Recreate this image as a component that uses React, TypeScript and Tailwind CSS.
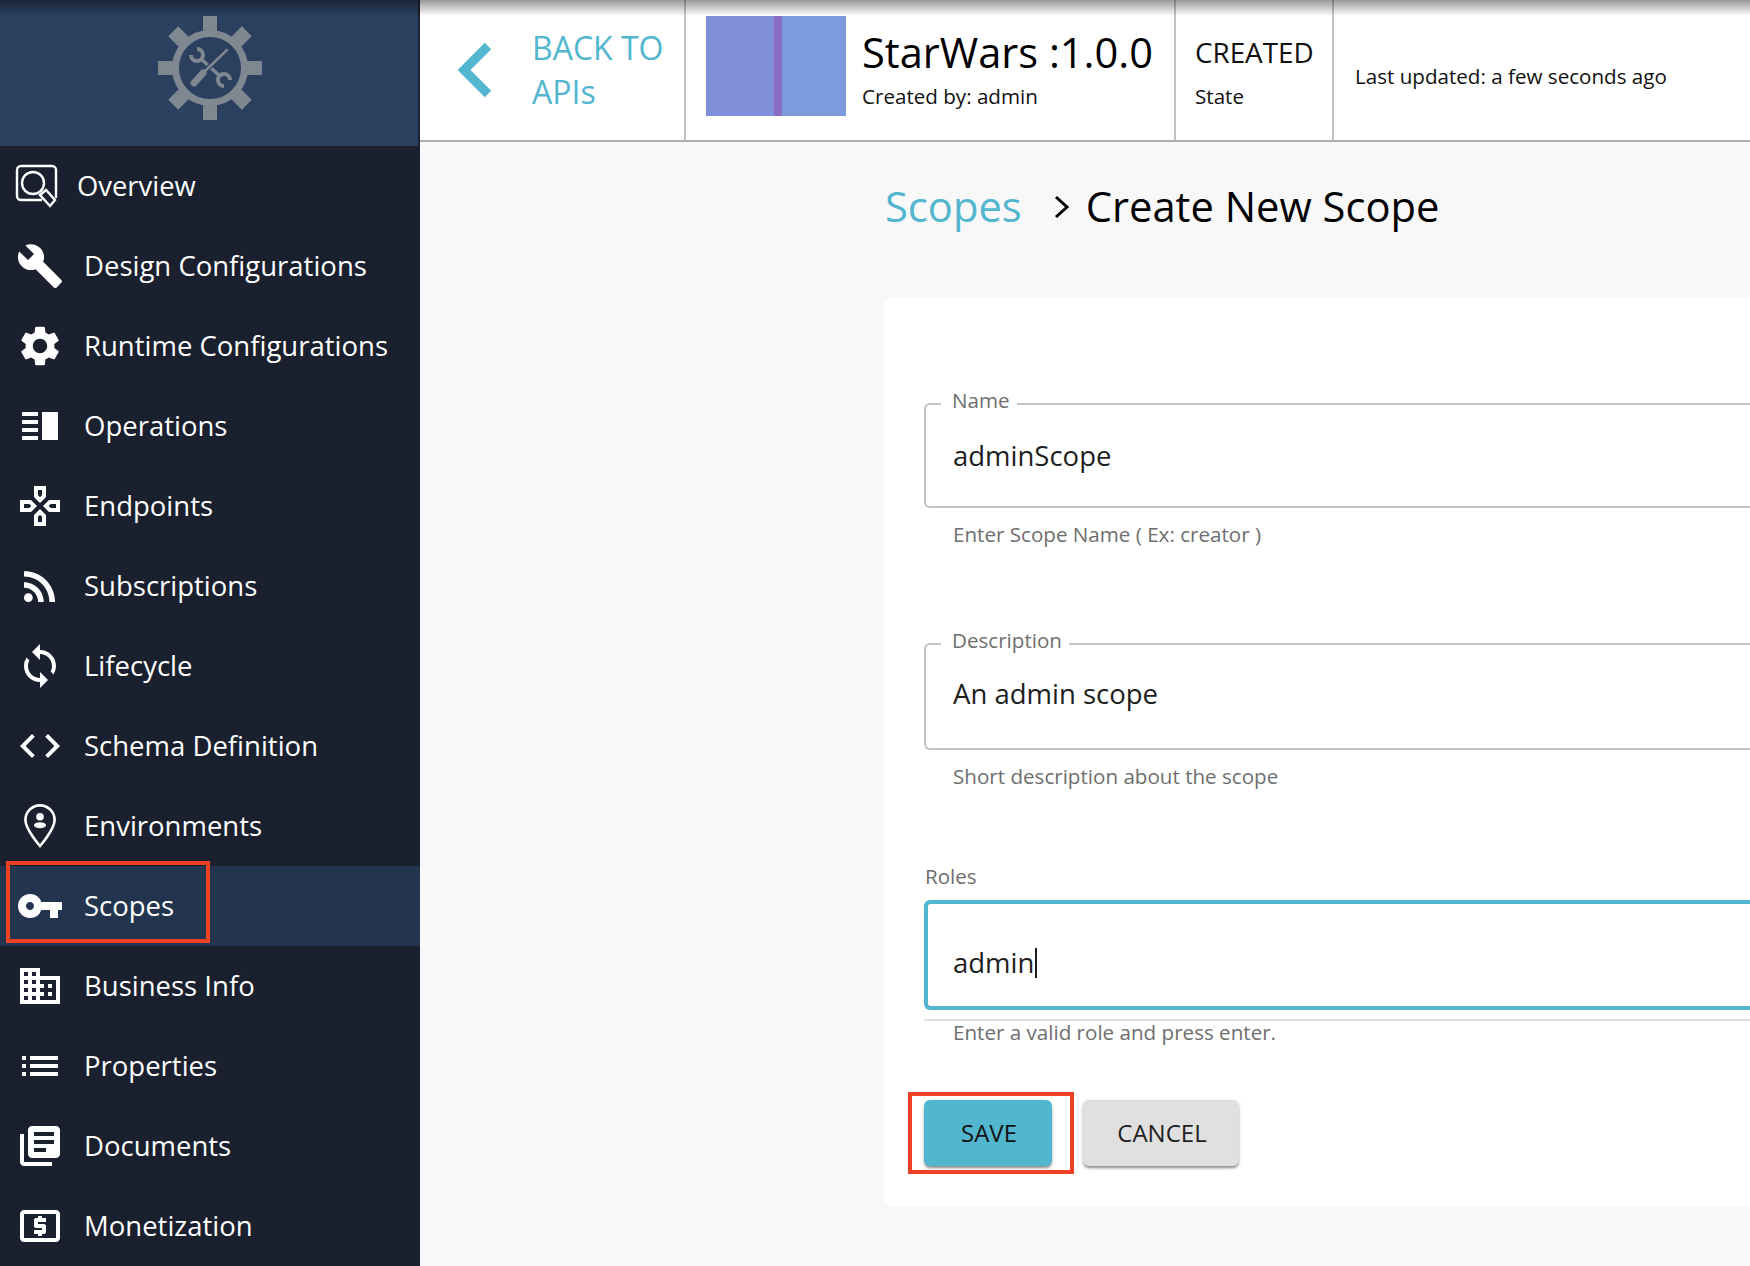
import { ReactNode } from "react";
import {
  MdBuild,
  MdBusiness,
  MdCode,
  MdLibraryBooks,
  MdList,
  MdOutlineGames,
  MdOutlineLocalAtm,
  MdRssFeed,
  MdSettings,
  MdSync,
  MdVpnKey,
} from "react-icons/md";

function OperationsIcon({ size }: { size: number }) {
  return (
    <svg width={size} height={size} viewBox="0 0 24 24" fill="currentColor">
      <rect x="3" y="5" width="8" height="2" />
      <rect x="3" y="9" width="8" height="2" />
      <rect x="3" y="13" width="8" height="2" />
      <rect x="3" y="17" width="8" height="2" />
      <rect x="13" y="5" width="8" height="14" />
    </svg>
  );
}

function EnvironmentIcon({ size }: { size: number }) {
  return (
    <svg width={size} height={size} viewBox="0 0 24 24" fill="none" stroke="currentColor" strokeWidth="1.3">
      <path d="M12 1.7c-4 0-7.3 3.2-7.3 7.3 0 4.6 7.3 13 7.3 13s7.3-8.4 7.3-13c0-4.1-3.3-7.3-7.3-7.3z" />
      <circle cx="12" cy="7.4" r="1.9" fill="currentColor" stroke="none" />
      <ellipse cx="12" cy="11.6" rx="3" ry="1.5" fill="currentColor" stroke="none" />
    </svg>
  );
}

function OverviewIcon() {
  return (
    <svg width="44" height="44" viewBox="0 0 44 44" fill="none" stroke="white" strokeWidth="2.4">
      <path d="M27 36H6a4 4 0 0 1-4-4V6a4 4 0 0 1 4-4h31a4 4 0 0 1 4 4v28" />
      <circle cx="18" cy="19" r="11" />
      <path d="M25 31l6-5 9 10-5 6z" fill="#1a202e" />
    </svg>
  );
}

function Logo() {
  const angles = [0, 45, 90, 135];
  return (
    <svg width="120" height="120" viewBox="0 0 120 120" fill="none" stroke="#7f8790">
      {angles.map((a) => (
        <rect key={a} x="53" y="8" width="14" height="104" fill="#7f8790" stroke="none" transform={`rotate(${a} 60 60)`} />
      ))}
      <circle cx="60" cy="60" r="34.5" strokeWidth="7" fill="#2b405f" />
      <path d="M50 50L71 69" strokeWidth="3.5" />
      <path d="M41 47A6 6 0 1 0 47 41" strokeWidth="4" />
      <path d="M80 72A6 6 0 1 0 74 78" strokeWidth="4" />
      <path d="M77 42L53 65" stroke="#2b405f" strokeWidth="5" />
      <path d="M77 42L53 65" strokeWidth="2.5" strokeLinecap="round" />
      <path d="M53 65L44 75" strokeWidth="7" strokeLinecap="round" />
    </svg>
  );
}

const navItems: { label: string; icon: ReactNode; active?: boolean }[] = [
  { label: "Design Configurations", icon: <MdBuild size={48} /> },
  { label: "Runtime Configurations", icon: <MdSettings size={48} /> },
  { label: "Operations", icon: <OperationsIcon size={48} /> },
  { label: "Endpoints", icon: <MdOutlineGames size={48} /> },
  { label: "Subscriptions", icon: <MdRssFeed size={48} /> },
  { label: "Lifecycle", icon: <MdSync size={48} /> },
  { label: "Schema Definition", icon: <MdCode size={48} /> },
  { label: "Environments", icon: <EnvironmentIcon size={48} /> },
  { label: "Scopes", icon: <MdVpnKey size={48} />, active: true },
  { label: "Business Info", icon: <MdBusiness size={48} /> },
  { label: "Properties", icon: <MdList size={48} /> },
  { label: "Documents", icon: <MdLibraryBooks size={48} /> },
  { label: "Monetization", icon: <MdOutlineLocalAtm size={48} /> },
];

function Sidebar() {
  return (
    <aside className="w-[420px] shrink-0 bg-[#1a202e] text-white">
      <div className="flex h-[146px] items-center justify-center border-r-2 border-[#1a202e] bg-[#2b405f] pb-[10px] pl-[2px]">
        <Logo />
      </div>
      <div className="flex h-20 items-center pl-[15px] text-[27.4px]">
        <OverviewIcon />
        <span className="ml-[18px]">Overview</span>
      </div>
      {navItems.map((item) => (
        <div key={item.label} className={`relative flex h-20 items-center pl-4 text-[27.5px] ${item.active ? "bg-[#23344f]" : ""}`}>
          {item.icon}
          <span className="ml-5">{item.label}</span>
          {item.active && <div className="absolute top-[-5px] left-[6px] h-[82px] w-[204px] border-4 border-[#ee4024]" />}
        </div>
      ))}
    </aside>
  );
}

function Header() {
  return (
    <header className="flex h-[142px] shrink-0 border-b-2 border-[#b0b0b0] bg-white text-black">
      <div className="flex w-[266px] items-center border-r-2 border-[#c4c4c4] pl-[36px]">
        <svg width="36" height="60" viewBox="0 0 36 60" fill="none" stroke="#53b6cf" strokeWidth="9">
          <path d="M32 6L8 30l24 24" />
        </svg>
        <div className="ml-10 text-[32px] leading-[44px] text-[#53b6cf]">
          BACK TO
          <br />
          APIs
        </div>
      </div>
      <div className="flex w-[490px] border-r-2 border-[#c4c4c4] pt-4 pl-5">
        <div className="flex h-[100px] w-[140px] shrink-0">
          <div className="w-[68px] bg-[#7f8fd9]" />
          <div className="w-2 bg-[#8a6cc4]" />
          <div className="flex-1 bg-[#7b9bde]" />
        </div>
        <div className="mt-3 ml-4">
          <div className="text-[41.6px] leading-[48px] text-black">StarWars :1.0.0</div>
          <div className="mt-[6px] text-[20.6px] leading-7 text-[#111]">Created by: admin</div>
        </div>
      </div>
      <div className="w-[158px] border-r-2 border-[#c4c4c4] pt-[33px] pl-[19px]">
        <div className="text-[27.8px] leading-[38px] text-[#111]">CREATED</div>
        <div className="mt-[11px] text-[20.6px] leading-7 text-[#111]">State</div>
      </div>
      <div className="flex items-center pt-3 pl-[21px] text-[20.6px] text-[#111]">Last updated: a few seconds ago</div>
    </header>
  );
}

function OutlinedField({ label, value, className }: { label: string; value: string; className: string }) {
  return (
    <fieldset className={`flex items-center rounded-l-[6px] border-2 border-r-0 border-[#c4c4c4] pl-[27px] ${className}`}>
      <legend className="ml-[-12px] pr-[7px] pb-2 pl-[11px] text-[20.6px] leading-7 text-[#6e6e6e]">{label}</legend>
      <div className="text-[27.5px] text-[#1e1e1e]">{value}</div>
    </fieldset>
  );
}

function Helper({ text, className }: { text: string; className: string }) {
  return <div className={`ml-[29px] text-[20.6px] text-[#6e6e6e] ${className}`}>{text}</div>;
}

const buttonShadow = "shadow-[0px_3px_3px_-1px_rgba(0,0,0,0.3),0px_2px_2px_0px_rgba(0,0,0,0.14),0px_1px_5px_0px_rgba(0,0,0,0.12)]";

function ScopeForm() {
  return (
    <section className="ml-[464px] rounded-l-[8px] bg-white pt-[88px] pb-10 pl-10">
      <OutlinedField label="Name" value="adminScope" className="h-[122px] pb-4" />
      <Helper text="Enter Scope Name ( Ex: creator )" className="mt-3 leading-7" />

      <div className="mt-[78px]">
        <OutlinedField label="Description" value="An admin scope" className="h-[124px] pb-[22px]" />
      </div>
      <Helper text="Short description about the scope" className="mt-3 leading-7" />

      <div className="mt-[72px] ml-px text-[20.6px] leading-7 text-[#6e6e6e]">Roles</div>
      <div className="mt-[10px] flex h-[110px] items-center rounded-l-[6px] border-4 border-r-0 border-[#53b6cf] pt-[15px] pl-[25px] text-[27.5px] text-[#1e1e1e]">
        admin
        <span className="ml-px inline-block h-[30px] w-[2px] bg-[#1e1e1e]" />
      </div>
      <div className="mt-[9px] h-[2px] bg-[#e0e0e0]" />
      <Helper text="Enter a valid role and press enter." className="-mt-px leading-6" />

      <div className="mt-[56px] flex gap-[31px]">
        <div className="relative">
          <button className={`h-[66px] w-[128px] rounded-[6px] bg-[#53b6cf] pl-[2px] text-[24px] text-[#111] ${buttonShadow}`}>SAVE</button>
          <div className="absolute top-[-8px] right-[-22px] bottom-[-8px] left-[-16px] border-4 border-[#ee4024]" />
        </div>
        <button className={`h-[66px] w-[156px] rounded-[6px] bg-[#e0e0e0] pl-[2px] text-[24px] text-[#1e1e1e] ${buttonShadow}`}>CANCEL</button>
      </div>
    </section>
  );
}

export default function App() {
  return (
    <div className="relative flex h-screen overflow-hidden bg-[#f8f8f8] font-['Open_Sans',sans-serif]">
      <Sidebar />
      <main className="flex min-w-0 flex-1 flex-col">
        <Header />
        <div className="flex h-[156px] shrink-0 items-center pb-[27px] pl-[465px] text-[41.7px]">
          <span className="text-[#53b6cf]">Scopes</span>
          <svg className="ml-[32px]" width="16" height="24" viewBox="0 0 16 24" fill="none" stroke="#000" strokeWidth="3">
            <path d="M2 2l11 10L2 22" />
          </svg>
          <span className="ml-4 text-black">Create New Scope</span>
        </div>
        <ScopeForm />
      </main>
      <div className="pointer-events-none absolute inset-x-0 top-0 h-4 bg-gradient-to-b from-black/40 to-transparent" />
    </div>
  );
}
